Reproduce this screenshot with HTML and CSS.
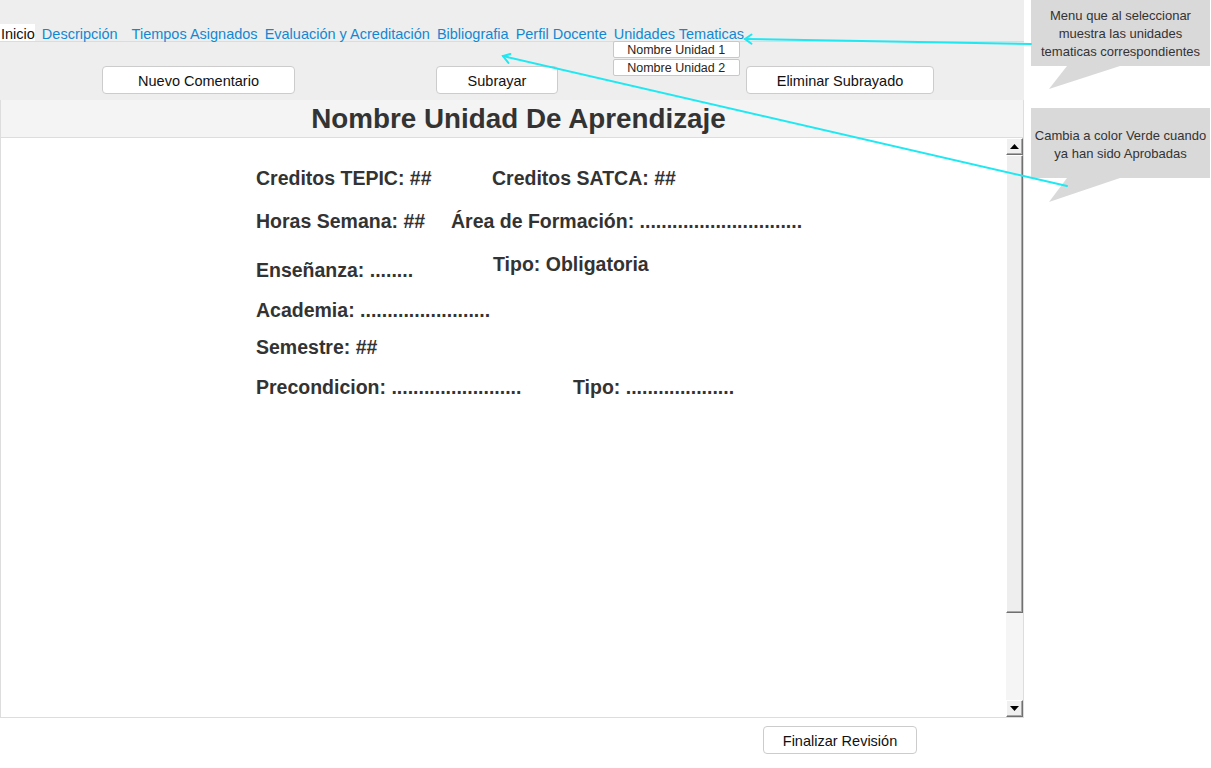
FILE: index.html
```html
<!DOCTYPE html>
<html lang="es">
<head>
<meta charset="utf-8">
<title>Revisión de Unidad</title>
<link rel="stylesheet" href="styles.css">
</head>
<body>
<div class="page">
  <main class="app">
    <header class="toolbar">
      <nav class="tabs">
        <a class="tab tab--active">Inicio</a>
        <a class="tab tab--wide">Descripción</a>
        <a class="tab">Tiempos Asignados</a>
        <a class="tab">Evaluación y Acreditación</a>
        <a class="tab">Bibliografia</a>
        <a class="tab">Perfil Docente</a>
        <div class="tab tab--menu">Unidades Tematicas
          <ul class="dropdown">
            <li>Nombre Unidad 1</li>
            <li>Nombre Unidad 2</li>
          </ul>
        </div>
      </nav>
      <div class="actions">
        <button class="btn btn--comment">Nuevo Comentario</button>
        <button class="btn btn--underline">Subrayar</button>
        <button class="btn btn--remove">Eliminar Subrayado</button>
      </div>
    </header>

    <div class="title-bar"><h1>Nombre Unidad De Aprendizaje</h1></div>

    <section class="content">
      <div class="info">
        <div class="row row--1"><span class="cell cell--a">Creditos TEPIC: ##</span><span>Creditos SATCA: ##</span></div>
        <div class="row row--2"><span class="cell cell--b">Horas Semana: ##</span><span>Área de Formación: ..............................</span></div>
        <div class="row row--3"><span class="cell cell--c cell--low">Enseñanza: ........</span><span>Tipo: Obligatoria</span></div>
        <div class="row row--4"><span>Academia: ........................</span></div>
        <div class="row row--5"><span>Semestre: ##</span></div>
        <div class="row row--6"><span class="cell cell--d">Precondicion: ........................</span><span>Tipo: ....................</span></div>
      </div>
      <div class="scrollbar">
        <div class="sb-btn"><svg width="9" height="5" viewBox="0 0 9 5"><polygon points="4.5,0 9,5 0,5" fill="#000"/></svg></div>
        <div class="sb-thumb"></div>
        <div class="sb-track"></div>
        <div class="sb-btn"><svg width="9" height="5" viewBox="0 0 9 5"><polygon points="0,0 9,0 4.5,5" fill="#000"/></svg></div>
      </div>
    </section>

    <footer class="footer">
      <button class="btn btn--finish">Finalizar Revisión</button>
    </footer>
  </main>

  <aside class="note note--menu">Menu que al seleccionar<br>muestra las unidades<br>tematicas correspondientes</aside>
  <aside class="note note--color">Cambia a color Verde cuando<br>ya han sido Aprobadas</aside>

  <svg class="overlay" width="1211" height="768" viewBox="0 0 1211 768">
    <polygon points="1067,66 1120,66 1049,89" fill="#d9d9d9"/>
    <polygon points="1067,178 1120,178 1049,202" fill="#d9d9d9"/>
    <g stroke="#1ee8f2" stroke-width="2" fill="none" stroke-linecap="round">
      <line x1="745" y1="39" x2="1031" y2="44"/>
      <polyline points="751.5,34.5 745,39 751.5,43.7"/>
      <line x1="503" y1="56" x2="1067" y2="186"/>
      <polyline points="510.4,54 503,56 508.4,62.9"/>
    </g>
  </svg>
</div>
</body>
</html>
```

FILE: styles.css
```css
* { box-sizing: border-box; }

html, body {
  margin: 0;
  padding: 0;
  background: #ffffff;
}

body {
  font-family: "Liberation Sans", Arial, sans-serif;
  color: #222;
}

.page {
  position: relative;
  width: 1211px;
  height: 768px;
  overflow: hidden;
}

.app {
  width: 1024px;
  display: flex;
  flex-direction: column;
}

/* ---------- toolbar ---------- */
.toolbar {
  height: 100px;
  background: #eeeeee;
  padding-top: 24px;
}

.tabs {
  display: flex;
  gap: 7px;
  height: 18px;
  padding-left: 1px;
  border-bottom: 1px solid #dcdcdc;
  font-size: 14.5px;
  line-height: 17px;
}

.tab {
  color: #1388d2;
  white-space: nowrap;
  height: 17px;
  padding-top: 2px;
}

.tab--active {
  color: #111;
  background: #ffffff;
  margin-left: -1px;
  padding-left: 1px;
}

.tab--wide { margin-right: 7px; }

.tab--menu { position: relative; }

.dropdown {
  position: absolute;
  left: -1px;
  top: 17px;
  margin: 0;
  padding: 0;
  list-style: none;
  display: flex;
  flex-direction: column;
  gap: 1px;
  z-index: 2;
}

.dropdown li {
  width: 127px;
  height: 17px;
  background: #ffffff;
  border: 1px solid #c8c8c8;
  border-radius: 2px;
  font-size: 12.5px;
  line-height: 16px;
  text-align: center;
  color: #2b2416;
}

.actions {
  display: flex;
  margin-top: 24px;
  padding-left: 102px;
}

.btn {
  font-family: "Liberation Sans", Arial, sans-serif;
  font-size: 14.5px;
  color: #111;
  background: #ffffff;
  border: 1px solid #cccccc;
  border-radius: 4px;
  height: 28px;
  padding: 2px 0 0;
  line-height: 24px;
}

.btn--comment { width: 193px; }
.btn--underline { width: 122px; margin-left: 141px; }
.btn--remove { width: 188px; margin-left: 188px; }

/* ---------- title ---------- */
.title-bar {
  height: 38px;
  background: #f4f4f4;
  border-left: 1px solid #dddddd;
  border-right: 1px solid #dddddd;
  border-bottom: 1px solid #dddddd;
  padding-left: 13px;
  text-align: center;
}

.title-bar h1 {
  margin: 0;
  font-size: 27.8px;
  line-height: 37px;
  font-weight: bold;
  color: #333333;
}

/* ---------- content ---------- */
.content {
  height: 580px;
  display: flex;
  background: #ffffff;
  border-left: 1px solid #dddddd;
  border-right: 1px solid #dddddd;
  border-bottom: 1px solid #dddddd;
}

.info {
  flex: 1;
  padding-top: 29px;
  padding-left: 255px;
  font-size: 19.5px;
  font-weight: bold;
  line-height: 22px;
  color: #333333;
  display: flex;
  flex-direction: column;
}

.row {
  display: flex;
  align-items: flex-start;
  white-space: nowrap;
}

.row--2 { margin-top: 21px; }
.row--3 { margin-top: 21px; }
.row--4 { margin-top: 18px; }
.row--5 { margin-top: 15px; }
.row--6 { margin-top: 18px; }

.cell--a { width: 236px; }
.cell--b { width: 195px; }
.cell--c { width: 237px; }
.cell--d { width: 317px; }
.cell--low { margin-top: 6px; }

.scrollbar {
  width: 17px;
  display: flex;
  flex-direction: column;
  background: #f4f4f4;
}

.sb-btn {
  height: 17px;
  background: #f0f0f0;
  border-top: 1px solid #ffffff;
  border-left: 1px solid #ffffff;
  border-right: 1px solid #707070;
  border-bottom: 1px solid #707070;
  box-shadow: inset -1px -1px 0 #a8a8a8;
  display: flex;
  align-items: center;
  justify-content: center;
}

.sb-btn svg { display: block; margin-right: 1px; margin-bottom: 1px; }

.sb-thumb {
  height: 458px;
  background: #eeeeee;
  border-top: 1px solid #ffffff;
  border-left: 1px solid #ffffff;
  border-right: 1px solid #707070;
  border-bottom: 1px solid #707070;
  box-shadow: inset -1px -1px 0 #a8a8a8;
}

.sb-track { flex: 1; background: #f5f5f5; }

/* ---------- footer ---------- */
.footer {
  padding-top: 8px;
  padding-left: 763px;
}

.btn--finish { width: 154px; }

/* ---------- annotations ---------- */
.note {
  position: absolute;
  left: 1031px;
  width: 179px;
  background: #d9d9d9;
  color: #333333;
  font-size: 13px;
  line-height: 18px;
  text-align: center;
}

.note--menu { top: 0; height: 66px; padding-top: 7px; }
.note--color { top: 108px; height: 70px; padding-top: 19px; }

.overlay {
  position: absolute;
  left: 0;
  top: 0;
  pointer-events: none;
  z-index: 3;
}
```
